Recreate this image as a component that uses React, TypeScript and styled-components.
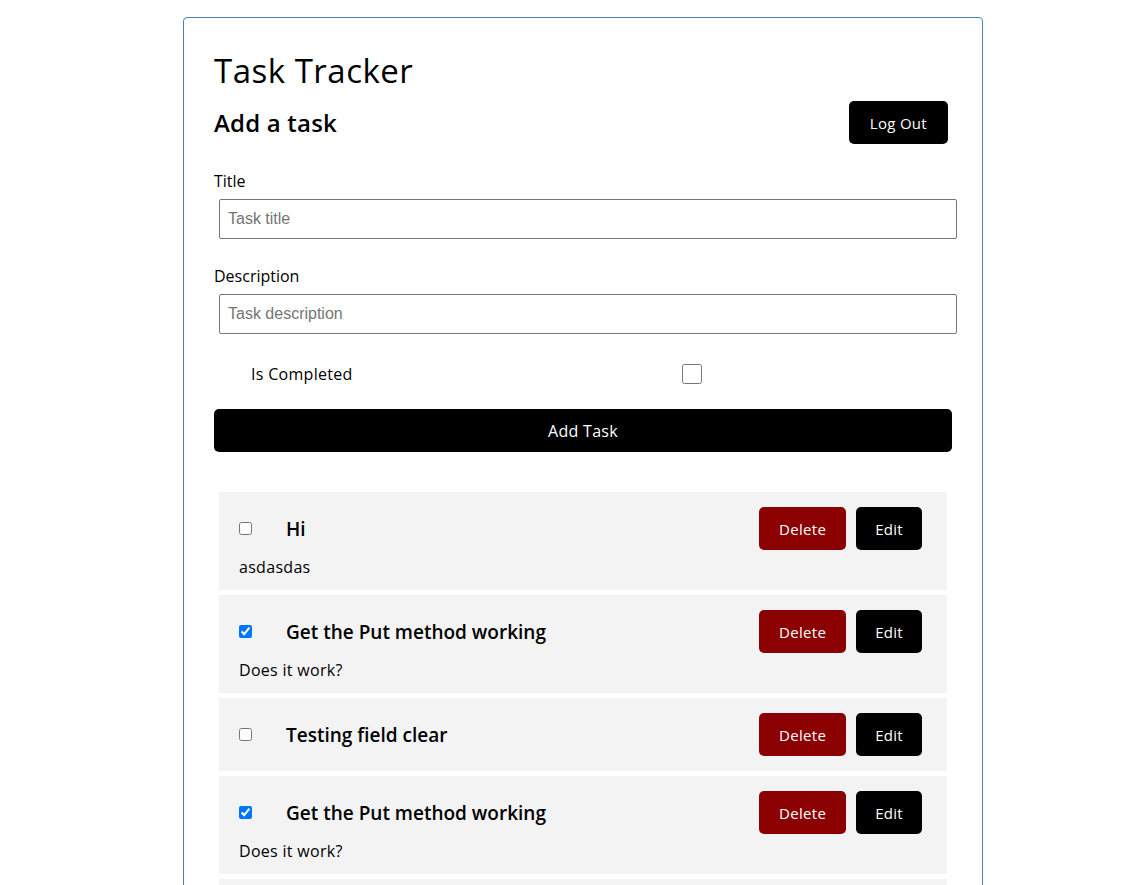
import React from "react";
import styled, { createGlobalStyle } from "styled-components";

const Global = createGlobalStyle`
  html, body { margin: 0; padding: 0; background: #ffffff; }
  body { font-family: "Open Sans", "Noto Sans", sans-serif; color: #000; }
  * { box-sizing: border-box; }
`;

const Page = styled.div`
  padding: 17px 0 0 183px;
`;

const Card = styled.div`
  width: 800px;
  min-height: 900px;
  border: 1px solid #4a80bb;
  border-radius: 4px;
  padding: 33px 30px 0 30px;
`;

const Title = styled.h1`
  margin: 0;
  font-size: 33px;
  line-height: 40px;
  font-weight: 400;
  letter-spacing: 0.5px;
`;

const HeaderRow = styled.div`
  margin-top: 10px;
  display: flex;
  align-items: center;
  justify-content: space-between;
  height: 43px;
  padding-right: 4px;
`;

const SubTitle = styled.h2`
  margin: 0;
  font-size: 24px;
  line-height: 30px;
  font-weight: 600;
  letter-spacing: 0.2px;
`;

const DarkButton = styled.button<{ $bg?: string; $px?: number }>`
  height: 43px;
  padding: 0 ${(p) => p.$px ?? 20}px;
  border: none;
  border-radius: 5px;
  background: ${(p) => p.$bg ?? "#000"};
  color: #fff;
  font-family: inherit;
  font-size: 15px;
  letter-spacing: 0.3px;
  cursor: pointer;
`;

const Label = styled.label<{ $top: number }>`
  display: block;
  margin-top: ${(p) => p.$top}px;
  font-size: 16px;
  line-height: 22px;
`;

const TextInput = styled.input`
  display: block;
  margin: 7px 0 0 5px;
  width: 738px;
  height: 40px;
  padding: 0 8px;
  border: 1px solid #767676;
  border-radius: 2px;
  font-family: "Liberation Sans", Arial, sans-serif;
  font-size: 16px;
  &::placeholder { color: #757575; }
`;

const CheckRow = styled.div`
  margin-top: 30px;
  display: flex;
  align-items: center;
  height: 20px;
  padding-left: 37px;
`;

const CheckLabel = styled.span`
  width: 431px;
  font-size: 16px;
  line-height: 20px;
  letter-spacing: 0.3px;
`;

const BigCheck = styled.input`
  width: 20px;
  height: 20px;
  margin: 0;
`;

const AddButton = styled(DarkButton)`
  display: block;
  margin-top: 25px;
  width: 738px;
  font-size: 16px;
`;

const List = styled.div`
  margin: 40px 5px 0 5px;
  display: flex;
  flex-direction: column;
  gap: 5px;
`;

const Item = styled.div`
  background: #f3f3f3;
  padding: 15px 25px 15px 20px;
`;

const ItemHead = styled.div`
  display: flex;
  align-items: center;
  height: 43px;
`;

const SmallCheck = styled.input`
  width: 13px;
  height: 13px;
  margin: 0 34px 0 0;
`;

const ItemTitle = styled.span`
  flex: 1;
  font-size: 19px;
  font-weight: 600;
`;

const Actions = styled.div`
  display: flex;
  gap: 10px;
`;

const ItemDesc = styled.p`
  margin: 6px 0 -3px;
  font-size: 16px;
  line-height: 22px;
  letter-spacing: 0.3px;
`;

const tasks = [
  { title: "Hi", desc: "asdasdas", done: false },
  { title: "Get the Put method working", desc: "Does it work?", done: true },
  { title: "Testing field clear", desc: "", done: false },
  { title: "Get the Put method working", desc: "Does it work?", done: true },
  { title: "Another task", desc: "", done: false },
];

export default function App() {
  return (
    <>
      <Global />
      <Page>
        <Card>
          <Title>Task Tracker</Title>
          <HeaderRow>
            <SubTitle>Add a task</SubTitle>
            <DarkButton $px={21}>Log Out</DarkButton>
          </HeaderRow>
          <Label $top={26}>Title</Label>
          <TextInput placeholder="Task title" />
          <Label $top={26}>Description</Label>
          <TextInput placeholder="Task description" />
          <CheckRow>
            <CheckLabel>Is Completed</CheckLabel>
            <BigCheck type="checkbox" />
          </CheckRow>
          <AddButton>Add Task</AddButton>
          <List>
            {tasks.map((t, i) => (
              <Item key={i}>
                <ItemHead>
                  <SmallCheck type="checkbox" defaultChecked={t.done} />
                  <ItemTitle>{t.title}</ItemTitle>
                  <Actions>
                    <DarkButton $bg="#8b0000" $px={20}>Delete</DarkButton>
                    <DarkButton $px={19}>Edit</DarkButton>
                  </Actions>
                </ItemHead>
                {t.desc && <ItemDesc>{t.desc}</ItemDesc>}
              </Item>
            ))}
          </List>
        </Card>
      </Page>
    </>
  );
}
